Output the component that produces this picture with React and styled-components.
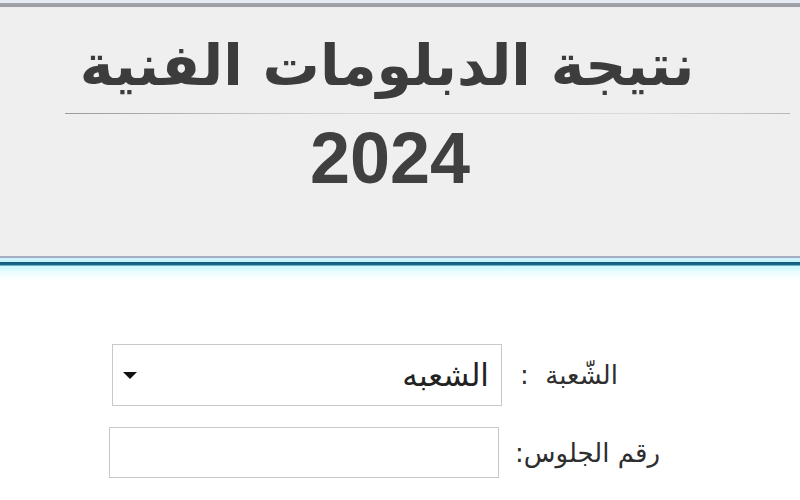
import React from 'react';
import styled, { createGlobalStyle } from 'styled-components';

const GlobalStyle = createGlobalStyle`
  html, body {
    margin: 0;
    padding: 0;
    background: #ffffff;
    width: 800px;
    height: 500px;
    overflow: hidden;
  }
`;

const Page = styled.div`
  width: 800px;
  height: 500px;
  font-family: "DejaVu Sans", sans-serif;
  background: #ffffff;
`;

const Header = styled.header`
  height: 256px;
  background: #efefef;
  border-top: 3px solid #e6eaf2;
  box-sizing: border-box;
  display: flex;
  flex-direction: column;
  align-items: center;
  &::before {
    content: '';
    display: block;
    align-self: stretch;
    height: 4px;
    background: linear-gradient(#a2a5ab, #9a9da3);
  }
`;

const Title = styled.h1`
  margin: 22px 26px 0 0;
  font-family: "DejaVu Sans", sans-serif;
  font-weight: bold;
  font-size: 57px;
  line-height: 72px;
  color: #3c3c3c;
  direction: rtl;
  white-space: nowrap;
`;

const Rule = styled.div`
  align-self: stretch;
  margin: 12px 10px 0 65px;
  height: 1px;
  background: linear-gradient(90deg, #9a9a9a 0%, #d2d2d2 35%, #dadada 80%, #b8b8b8 100%);
`;

const Year = styled.div`
  margin-top: 8px;
  margin-left: -20px;
  font-family: "Liberation Sans", Arial, sans-serif;
  font-weight: bold;
  font-size: 72px;
  line-height: 72px;
  color: #404040;
`;

const Band = styled.div`
  height: 24px;
  background: linear-gradient(
    #a7adc2 0px,
    #a7adc2 2px,
    #c9f3fb 2px,
    #c9f3fb 6px,
    #0f5878 6px,
    #1a6a88 9px,
    #c8f6fd 10px,
    #eafdff 16px,
    #ffffff 24px
  );
`;

const Form = styled.form`
  direction: rtl;
  display: flex;
  flex-direction: column;
  gap: 21px;
  padding-top: 64px;
`;

const Row = styled.div`
  display: flex;
  align-items: center;
  margin-right: ${(p) => p.$inset}px;
`;

const Label = styled.label`
  width: ${(p) => p.$w}px;
  font-size: 26px;
  color: #2e2e2e;
  white-space: pre;
`;

const Box = styled.div`
  box-sizing: border-box;
  width: 390px;
  height: ${(p) => p.$h}px;
  border: 1px solid #c8c8c8;
  background: #ffffff;
  display: flex;
  align-items: center;
  justify-content: space-between;
  padding: 0 12px 0 10px;
`;

const Choice = styled.span`
  font-size: 31px;
  color: #222;
`;

const Caret = styled.span`
  width: 0;
  height: 0;
  border-left: 7px solid transparent;
  border-right: 7px solid transparent;
  border-top: 7px solid #111;
`;

export default function App() {
  return (
    <Page>
      <GlobalStyle />
      <Header>
        <Title>نتيجة الدبلومات الفنية</Title>
        <Rule />
        <Year>2024</Year>
      </Header>
      <Band />
      <Form>
        <Row $inset={182}>
          <Label $w={116}>{'الشّعبة  :'}</Label>
          <Box $h={62}>
            <Choice>الشعبه</Choice>
            <Caret />
          </Box>
        </Row>
        <Row $inset={140}>
          <Label $w={161}>رقم الجلوس:</Label>
          <Box $h={51} />
        </Row>
      </Form>
    </Page>
  );
}
